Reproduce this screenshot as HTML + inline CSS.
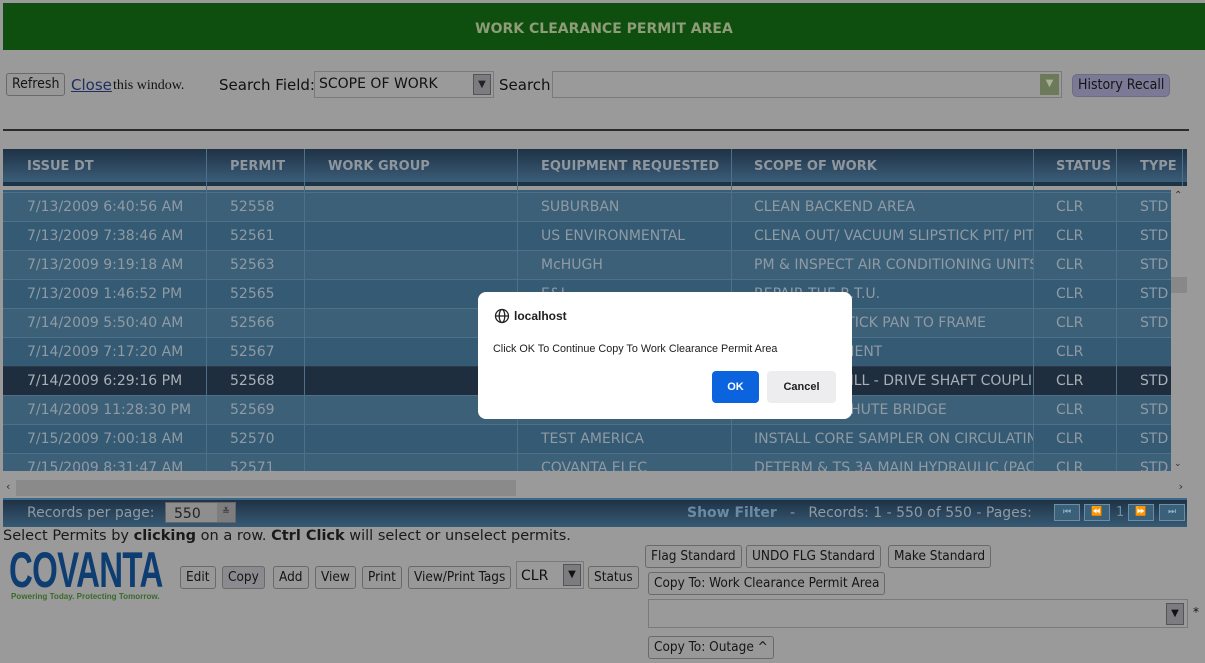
<!DOCTYPE html>
<html><head><meta charset="utf-8"><style>
*{box-sizing:border-box;margin:0;padding:0}
body{width:1205px;height:663px;background:#9a9a9a;font-family:"DejaVu Sans","Liberation Sans",sans-serif;font-size:14px;color:#111;position:relative;overflow:hidden}
.a{position:absolute;white-space:nowrap}
.btn{position:absolute;border:1px solid #6a6a6a;border-radius:3px;background:#989898;font-size:13.5px;height:23px;line-height:21px;padding:0 5px;color:#151515;font-family:"DejaVu Sans Condensed","DejaVu Sans",sans-serif}
.hdr{position:absolute;top:149px;left:3px;width:1184px;height:37px;background:linear-gradient(#1f3246,#3b5d78);border-bottom:4px solid #1c3446}
.hdr span{position:absolute;top:10px;font-weight:bold;color:#8e969e;font-size:13px}
.row{position:absolute;left:3px;width:1168px;height:29px;border-top:1px solid #4e7089}
.row span{position:absolute;top:6px;color:#8f9aa3;font-size:14px;white-space:nowrap;overflow:hidden}
.vl{position:absolute;top:149px;width:1px;height:322px;background:#4e7089}
.pg{position:absolute;top:504px;width:26px;height:17px;border:1px solid #6a8fa5;background:#3b6079;color:#8fb5c8;font-size:9px;text-align:center;line-height:15px}
</style></head><body>
<div class="a" style="left:3px;top:3px;width:1202px;height:47px;background:#0e4f0f;color:#8f9c78;font-weight:bold;font-size:14px;text-align:center;line-height:52px">WORK CLEARANCE PERMIT AREA</div>
<div class="btn" style="left:6px;top:73px;font-size:14px">Refresh</div>
<div class="a" style="left:71px;top:76px;color:#1f2f60;text-decoration:underline;font-size:15px">Close</div>
<div class="a" style="left:113px;top:78px;font-family:'Liberation Serif',serif;font-size:14px">this window.</div>
<div class="a" style="left:219px;top:76px;font-size:15px">Search Field:</div>
<div class="a" style="left:314px;top:71px;width:180px;height:27px;border:1px solid #7a7a7a;background:#9a9a9a"><span style="position:absolute;left:4px;top:4px;font-size:14px">SCOPE OF WORK</span><div style="position:absolute;right:2px;top:2px;width:18px;height:21px;background:#7c7c80;border:1px solid #555;color:#222;font-size:10px;text-align:center;line-height:20px">▼</div></div>
<div class="a" style="left:499px;top:76px;font-size:15px">Search</div>
<div class="a" style="left:552px;top:71px;width:510px;height:27px;border:1px solid #7a7a7a"><div style="position:absolute;right:2px;top:2px;width:19px;height:21px;background:#6c7a5a;color:#aab09a;font-size:10px;text-align:center;line-height:20px">▼</div></div>
<div class="btn" style="left:1072px;top:74px;background:#7a7a96;border-color:#6d6d80;border-radius:5px;font-size:14px">History Recall</div>
<div class="a" style="left:3px;top:129px;width:1186px;height:2px;background:#2a2a2a"></div>

<div class="hdr">
<span style="left:24px">ISSUE DT</span><span style="left:227px">PERMIT</span><span style="left:325px">WORK GROUP</span><span style="left:538px">EQUIPMENT REQUESTED</span><span style="left:751px">SCOPE OF WORK</span><span style="left:1053px">STATUS</span><span style="left:1137px">TYPE</span>
</div>
<div class="a" style="left:3px;top:190px;width:1168px;height:281px;background:#3a5d77"></div>
<div class="row" style="top:192px;background:#3d6079"><span style="left:24px">7/13/2009 6:40:56 AM</span><span style="left:227px">52558</span><span style="left:538px">SUBURBAN</span><span style="left:751px">CLEAN BACKEND AREA</span><span style="left:1053px">CLR</span><span style="left:1137px">STD</span></div>
<div class="row" style="top:221px;background:#345a74"><span style="left:24px">7/13/2009 7:38:46 AM</span><span style="left:227px">52561</span><span style="left:538px">US ENVIRONMENTAL</span><span style="left:751px;width:280px">CLENA OUT/ VACUUM SLIPSTICK PIT/ PIT</span><span style="left:1053px">CLR</span><span style="left:1137px">STD</span></div>
<div class="row" style="top:250px;background:#3d6079"><span style="left:24px">7/13/2009 9:19:18 AM</span><span style="left:227px">52563</span><span style="left:538px">McHUGH</span><span style="left:751px;width:280px">PM &amp; INSPECT AIR CONDITIONING UNITS</span><span style="left:1053px">CLR</span><span style="left:1137px">STD</span></div>
<div class="row" style="top:279px;background:#345a74"><span style="left:24px">7/13/2009 1:46:52 PM</span><span style="left:227px">52565</span><span style="left:538px">E&amp;I</span><span style="left:751px">REPAIR THE R.T.U.</span><span style="left:1053px">CLR</span><span style="left:1137px">STD</span></div>
<div class="row" style="top:308px;background:#3d6079"><span style="left:24px">7/14/2009 5:50:40 AM</span><span style="left:227px">52566</span><span style="left:751px;width:280px">REPAIR SLIPSTICK PAN TO FRAME</span><span style="left:1053px">CLR</span><span style="left:1137px">STD</span></div>
<div class="row" style="top:337px;background:#345a74"><span style="left:24px">7/14/2009 7:17:20 AM</span><span style="left:227px">52567</span><span style="left:751px">MOVE EQUIPMENT</span><span style="left:1053px">CLR</span></div>
<div class="row" style="top:366px;background:#1f2e3f;border-top-color:#2a3a4a"><span style="left:24px;color:#a9b0b6">7/14/2009 6:29:16 PM</span><span style="left:227px;color:#a9b0b6">52568</span><span style="left:751px;width:280px;color:#a9b0b6">REPAIR PUGMILL - DRIVE SHAFT COUPLING</span><span style="left:1053px;color:#a9b0b6">CLR</span><span style="left:1137px;color:#a9b0b6">STD</span></div>
<div class="row" style="top:395px;background:#3d6079"><span style="left:24px">7/14/2009 11:28:30 PM</span><span style="left:227px">52569</span><span style="left:751px">REPAIR THE CHUTE BRIDGE</span><span style="left:1053px">CLR</span><span style="left:1137px">STD</span></div>
<div class="row" style="top:424px;background:#345a74"><span style="left:24px">7/15/2009 7:00:18 AM</span><span style="left:227px">52570</span><span style="left:538px">TEST AMERICA</span><span style="left:751px;width:280px">INSTALL CORE SAMPLER ON CIRCULATING</span><span style="left:1053px">CLR</span><span style="left:1137px">STD</span></div>
<div class="row" style="top:453px;height:18px;background:#3d6079;overflow:hidden"><span style="left:24px">7/15/2009 8:31:47 AM</span><span style="left:227px">52571</span><span style="left:538px">COVANTA ELEC</span><span style="left:751px;width:280px">DETERM &amp; TS 3A MAIN HYDRAULIC (PACK)</span><span style="left:1053px">CLR</span><span style="left:1137px">STD</span></div>
<div class="vl" style="left:206px"></div><div class="vl" style="left:304px"></div><div class="vl" style="left:517px"></div><div class="vl" style="left:731px"></div><div class="vl" style="left:1033px"></div><div class="vl" style="left:1116px"></div><div class="vl" style="left:1182px;height:37px"></div>
<div class="a" style="left:1171px;top:190px;width:16px;height:281px;background:#9a9a9a"><div style="position:absolute;top:87px;left:0;width:16px;height:16px;background:#888"></div><div style="position:absolute;top:0;left:3px;font-size:10px;color:#333">⌃</div><div style="position:absolute;bottom:2px;left:3px;font-size:9px;color:#333">⌄</div></div>
<div class="a" style="left:3px;top:480px;width:1184px;height:16px;background:#9a9a9a"><div style="position:absolute;left:13px;top:0;width:500px;height:16px;background:#8a8a8a"></div><span style="position:absolute;left:3px;top:0;font-size:11px;color:#333">‹</span><span style="position:absolute;right:4px;top:0;font-size:11px;color:#333">›</span></div>
<div class="a" style="left:3px;top:498px;width:1184px;height:29px;background:linear-gradient(#1f3246,#375a74);border-top:2px solid #3a6a88"></div>
<div class="a" style="left:27px;top:505px;color:#8f9aa3;font-size:14px">Records per page:</div>
<div class="a" style="left:165px;top:502px;width:71px;height:21px;background:#8e8e8e;border:1px solid #666"><span style="position:absolute;left:8px;top:3px;font-size:14px;color:#222">550</span><div style="position:absolute;right:0;top:0;width:18px;height:19px;background:#7d7d80;font-size:9px;text-align:center;line-height:19px;color:#222">≚</div></div>
<div class="a" style="left:687px;top:505px;color:#6b8aa3;font-weight:bold;font-size:14px">Show Filter</div>
<div class="a" style="left:790px;top:505px;color:#8f9aa3;font-size:14px">-&nbsp;&nbsp; Records: 1 - 550 of 550 - Pages:</div>
<div class="pg" style="left:1054px">⏮</div><div class="pg" style="left:1084px">⏪</div>
<div class="a" style="left:1116px;top:505px;color:#6a8fa5;font-size:13px">1</div>
<div class="pg" style="left:1128px">⏩</div><div class="pg" style="left:1159px">⏭</div>
<div class="a" style="left:3px;top:528px;font-size:14.5px;color:#1a1a1a">Select Permits by <b>clicking</b> on a row. <b>Ctrl Click</b> will select or unselect permits.</div>
<div class="a" style="left:9px;top:545px;font-family:'Liberation Sans',sans-serif;font-weight:bold;font-size:50px;color:#0e3d72;transform:scaleX(0.66);transform-origin:left;letter-spacing:-1px;line-height:50px">COVANTA</div>
<div class="a" style="left:11px;top:591px;font-size:8.5px;color:#3a6a2a;font-weight:bold;font-family:'Liberation Sans',sans-serif;transform:scaleX(0.95);transform-origin:left">Powering Today. Protecting Tomorrow.</div>
<div class="btn" style="left:180px;top:566px">Edit</div>
<div class="btn" style="left:222px;top:566px;background:#8b8b8f">Copy</div>
<div class="btn" style="left:273px;top:566px">Add</div>
<div class="btn" style="left:315px;top:566px">View</div>
<div class="btn" style="left:362px;top:566px">Print</div>
<div class="btn" style="left:408px;top:566px">View/Print Tags</div>
<div class="a" style="left:516px;top:561px;width:68px;height:28px;border:1px solid #7a7a7a"><span style="position:absolute;left:4px;top:6px;font-size:14px">CLR</span><div style="position:absolute;right:2px;top:2px;width:18px;height:22px;background:#7c7c80;border:1px solid #555;font-size:10px;text-align:center;line-height:20px">▼</div></div>
<div class="btn" style="left:588px;top:566px">Status</div>
<div class="btn" style="left:645px;top:545px">Flag Standard</div>
<div class="btn" style="left:746px;top:545px">UNDO FLG Standard</div>
<div class="btn" style="left:888px;top:545px">Make Standard</div>
<div class="btn" style="left:648px;top:572px">Copy To: Work Clearance Permit Area</div>
<div class="a" style="left:648px;top:599px;width:540px;height:29px;border:1px solid #7a7a7a"><div style="position:absolute;right:3px;top:3px;width:18px;height:22px;background:#7c7c80;border:1px solid #555;font-size:10px;text-align:center;line-height:20px">▼</div></div>
<div class="a" style="left:1193px;top:605px;font-size:12px">*</div>
<div class="btn" style="left:648px;top:636px">Copy To: Outage ^</div>

<div class="a" style="left:478px;top:292px;width:374px;height:127px;background:#fff;border-radius:8px;font-family:'Liberation Sans',sans-serif">
<svg style="position:absolute;left:16px;top:16px" width="16" height="16" viewBox="0 0 16 16" fill="none" stroke="#222" stroke-width="1.3"><circle cx="8" cy="8" r="6.5"/><ellipse cx="8" cy="8" rx="2.8" ry="6.5"/><path d="M1.5 8h13"/></svg>
<div class="a" style="left:36px;top:17px;font-weight:bold;font-size:12px;color:#202020">localhost</div>
<div class="a" style="left:15px;top:51px;font-size:10.8px;color:#202020">Click OK To Continue Copy To Work Clearance Permit Area</div>
<div class="a" style="left:234px;top:79px;width:47px;height:32px;background:#0b63de;border-radius:4px;color:#fff;font-weight:bold;font-size:11px;text-align:center;line-height:32px">OK</div>
<div class="a" style="left:289px;top:79px;width:69px;height:32px;background:#ededf0;border-radius:4px;color:#202020;font-weight:bold;font-size:11px;text-align:center;line-height:32px">Cancel</div>
</div>
</body></html>
